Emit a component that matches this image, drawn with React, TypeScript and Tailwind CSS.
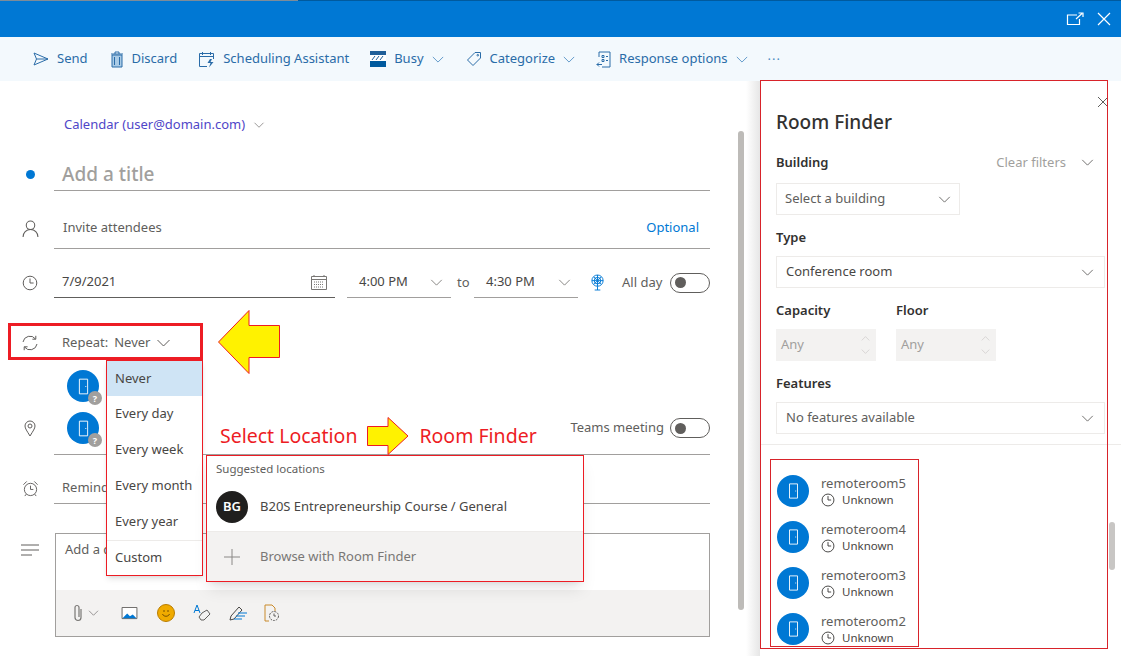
import { ReactNode } from "react";

const font = { fontFamily: '"Noto Sans", sans-serif' };

function Chevron({ className = "" }: { className?: string }) {
  return (
    <svg viewBox="0 0 14 8" className={className} fill="none" stroke="currentColor" strokeWidth="1">
      <path d="M1 1l6 6 6-6" />
    </svg>
  );
}

function Door({ small = false }: { small?: boolean }) {
  return (
    <svg viewBox="0 0 12 18" className={small ? "h-[16px] w-[11px]" : "h-[17px] w-[11px]"} fill="none" stroke="#fff" strokeWidth="1">
      <path d="M1.5 1h9v16h-9z" />
      <path d="M8 9h1" />
    </svg>
  );
}

function ClockIcon({ className = "", color = "currentColor" }: { className?: string; color?: string }) {
  return (
    <svg viewBox="0 0 16 16" className={className} fill="none" stroke={color} strokeWidth="1">
      <circle cx="8" cy="8" r="6.8" />
      <path d="M8 3.5V8h3.6" />
    </svg>
  );
}

function Toggle() {
  return (
    <div className="flex h-[20px] w-[40px] items-center rounded-full border border-[#605e5c] pl-[4px]">
      <div className="h-[11px] w-[11px] rounded-full bg-[#605e5c]" />
    </div>
  );
}

function ToolItem({ icon, label, chevron, className = "" }: { icon: ReactNode; label: string; chevron?: boolean; className?: string }) {
  return (
    <div className={`flex items-center ${className}`}>
      {icon}
      <span className="ml-[8px] text-[13px] text-[#2a6ca8]">{label}</span>
      {chevron && <Chevron className="ml-[8px] h-[7px] w-[12px] text-[#4d8cc2]" />}
    </div>
  );
}

function Row({ icon, children, className = "" }: { icon?: ReactNode; children: ReactNode; className?: string }) {
  return (
    <div className={`flex ${className}`}>
      <div className="flex w-[54px] shrink-0 items-center justify-center pr-[1px] pl-[7px] text-[#605e5c]">{icon}</div>
      {children}
    </div>
  );
}

function RoomAvatar() {
  return (
    <div className="relative flex h-[32px] w-[32px] items-center justify-center rounded-full bg-[#0078d4]">
      <Door />
      <div className="absolute right-[-3px] bottom-[-3px] flex h-[14px] w-[14px] items-center justify-center rounded-full bg-[#a19f9d] text-[9px] leading-none font-bold text-white">
        ?
      </div>
    </div>
  );
}

function FilterLabel({ children, className = "" }: { children: ReactNode; className?: string }) {
  return <div className={`text-[13px] leading-[18px] font-semibold text-[#323130] ${className}`}>{children}</div>;
}

function SelectBox({ label, className = "", muted = false }: { label: string; className?: string; muted?: boolean }) {
  return (
    <div className={`flex h-[32px] items-center justify-between border border-[#edebe9] ${className}`}>
      <span className={`text-[13px] ${muted ? "text-[#605e5c]" : "text-[#484644]"}`}>{label}</span>
      <Chevron className="h-[7px] w-[13px] text-[#605e5c]" />
    </div>
  );
}

function AnyInput() {
  return (
    <div className="flex h-[32px] w-[100px] items-center justify-between bg-[#f3f2f1] pr-[6px] pl-[5px]">
      <span className="text-[13px] text-[#a19f9d]">Any</span>
      <div className="flex flex-col gap-[8px] text-[#c8c6c4]">
        <Chevron className="h-[5px] w-[9px] rotate-180" />
        <Chevron className="h-[5px] w-[9px]" />
      </div>
    </div>
  );
}

const rooms = ["remoteroom5", "remoteroom4", "remoteroom3", "remoteroom2"];
const repeatOptions = ["Every day", "Every week", "Every month", "Every year"];

export default function App() {
  return (
    <div className="relative flex h-[656px] w-[1121px] flex-col overflow-hidden bg-white text-[#323130]" style={font}>
      {/* title bar */}
      <div className="flex h-[37px] shrink-0 flex-col bg-[#0078d4]">
        <div className="flex h-[1px] bg-[#005a9e]">
          <div className="w-[298px] bg-[#7d8c99]" />
        </div>
        <div className="flex flex-1 items-center justify-end gap-[13px] pr-[10px] text-white">
          <svg viewBox="0 0 18 14" className="h-[14px] w-[18px]" fill="none" stroke="currentColor" strokeWidth="1.2">
            <path d="M11 3H1.5v9.5h12V7" />
            <path d="M10 7l6-5.5M12.5 1H17v4" />
          </svg>
          <svg viewBox="0 0 14 14" className="h-[14px] w-[14px]" fill="none" stroke="currentColor" strokeWidth="1.2">
            <path d="M1 1l12 12M13 1L1 13" />
          </svg>
        </div>
      </div>

      {/* command bar */}
      <div className="flex h-[44px] shrink-0 items-center bg-[#f3f9fd] pl-[33px]">
        <ToolItem
          label="Send"
          icon={
            <svg viewBox="0 0 16 16" className="h-[16px] w-[16px]" fill="none" stroke="#2a6ca8" strokeWidth="1">
              <path d="M1 2l14 6-14 6 2.5-6zM3.5 8H15" />
            </svg>
          }
        />
        <ToolItem
          className="ml-[22px]"
          label="Discard"
          icon={
            <svg viewBox="0 0 14 17" className="h-[17px] w-[14px]" fill="none" stroke="#2a6ca8" strokeWidth="1">
              <path d="M2 4h10v12H2z" fill="#a9cbe6" />
              <path d="M1 3h12M5 3V1h4v2M4.5 6v8M9.5 6v8" />
            </svg>
          }
        />
        <ToolItem
          className="ml-[21px]"
          label="Scheduling Assistant"
          icon={
            <svg viewBox="0 0 17 17" className="h-[17px] w-[17px]" fill="none" stroke="#2a6ca8" strokeWidth="1">
              <path d="M9 15.5H1.5v-13h14V8M1.5 5.5h14M4.5 1v3M12.5 1v3" />
              <path d="M12 8l-2.5 4h3L11 16.5l4.5-5.5h-3l1.5-3z" fill="#2a6ca8" stroke="none" />
            </svg>
          }
        />
        <ToolItem
          className="ml-[21px]"
          label="Busy"
          chevron
          icon={
            <svg viewBox="0 0 16 16" className="h-[16px] w-[16px]">
              <path d="M0 0h16v4H0z" fill="#1f5f99" />
              <path d="M0 4h16v6H0z" fill="#fff" />
              <path d="M2 9l3-4M6 9l3-4M10 9l3-4" stroke="#1f5f99" strokeWidth="1" />
              <path d="M0 10h16v6H0z" fill="#005a9e" />
            </svg>
          }
        />
        <ToolItem
          className="ml-[22px]"
          label="Categorize"
          chevron
          icon={
            <svg viewBox="0 0 16 16" className="h-[16px] w-[16px]" fill="none" stroke="#2a6ca8" strokeWidth="1">
              <path d="M9 1.5h5.5V7L7 14.5 1.5 9z" />
              <circle cx="11.8" cy="4.2" r="0.8" />
            </svg>
          }
        />
        <ToolItem
          className="ml-[21px]"
          label="Response options"
          chevron
          icon={
            <svg viewBox="0 0 15 17" className="h-[17px] w-[15px]" fill="none" stroke="#2a6ca8" strokeWidth="1">
              <path d="M3 6V1h11v15H6" />
              <path d="M6 4.5h2v2H6zM10 5.5h2M6 8.5h2v2H6zM10 9.5h2M6 13.5H0.8M3 11.5l-2 2 2 2" />
            </svg>
          }
        />
        <span className="ml-[20px] text-[13px] leading-none tracking-[1px] text-[#4d8cc2]">···</span>
      </div>

      <div className="flex min-h-0 flex-1">
        {/* compose form */}
        <div className="relative flex w-[760px] shrink-0">
          <div className="w-[737px] shrink-0">
            <div className="mt-[33px] flex h-[22px] items-center pl-[64px] text-[13px] text-[#4f46c8]">
              Calendar (user@domain.com)
              <Chevron className="ml-[8px] h-[6px] w-[12px] text-[#797775]" />
            </div>

            <Row
              className="mt-[22px] h-[33px]"
              icon={<div className="h-[9px] w-[9px] rounded-full bg-[#0078d4]" />}
            >
              <div className="flex w-[656px] items-center border-b border-[#a19f9d] pl-[8px] text-[19px] font-medium text-[#a19f9d]">
                Add a title
              </div>
            </Row>

            <Row
              className="mt-[16px] h-[42px]"
              icon={
                <svg viewBox="0 0 16 16" className="h-[17px] w-[17px]" fill="none" stroke="currentColor" strokeWidth="1">
                  <circle cx="8" cy="5" r="4" />
                  <path d="M1 16c0-4 3-7 7-7s7 3 7 7" />
                </svg>
              }
            >
              <div className="flex w-[656px] items-center justify-between border-b border-[#a19f9d] pr-[11px] pl-[9px] text-[13px]">
                <span className="text-[#605e5c]">Invite attendees</span>
                <span className="text-[#0078d4]">Optional</span>
              </div>
            </Row>

            <Row
              className="mt-[18px] h-[31px]"
              icon={<ClockIcon className="h-[16px] w-[16px]" color="#605e5c" />}
            >
              <div className="flex w-[656px] items-center text-[13px]">
                <div className="flex h-full w-[281px] items-center justify-between border-b border-[#605e5c] pr-[8px] pl-[8px] text-[#484644]">
                  7/9/2021
                  <svg viewBox="0 0 16 16" className="h-[16px] w-[16px]" fill="none" stroke="#797775" strokeWidth="1">
                    <path d="M.5 2.5h15v13H.5zM.5 5.5h15M3 1v2M13 1v2" />
                    <path d="M3 8h10M3 10.5h10M3 13h10" strokeDasharray="1 1" />
                  </svg>
                </div>
                <div className="ml-[12px] flex h-full w-[104px] items-center justify-between border-b border-[#a19f9d] pr-[8px] pl-[12px] text-[#484644]">
                  4:00 PM
                  <Chevron className="h-[7px] w-[13px] text-[#797775]" />
                </div>
                <span className="mx-[6px] w-[11px] text-[#605e5c]">to</span>
                <div className="flex h-full w-[104px] items-center justify-between border-b border-[#a19f9d] pr-[7px] pl-[12px] text-[#484644]">
                  4:30 PM
                  <Chevron className="h-[7px] w-[13px] text-[#797775]" />
                </div>
                <svg viewBox="0 0 16 18" className="ml-[12px] h-[17px] w-[15px]" fill="none" stroke="#0078d4" strokeWidth="1">
                  <circle cx="8" cy="7" r="6" />
                  <circle cx="8" cy="7" r="3.5" />
                  <path d="M2 7h12M8 1v12M4 3l8 8M12 3l-8 8M8 13v4M5 17h6" />
                </svg>
                <span className="ml-[17px] text-[#605e5c]">All day</span>
                <div className="ml-auto">
                  <Toggle />
                </div>
              </div>
            </Row>

            <Row
              className="mt-[30px] h-[30px]"
              icon={
                <svg viewBox="0 0 16 16" className="h-[16px] w-[16px]" fill="none" stroke="currentColor" strokeWidth="1">
                  <path d="M1 7a7 7 0 0 1 12.5-3M15 9a7 7 0 0 1-12.5 3" />
                  <path d="M13.8 .8v3.4h-3.4M2.2 15.2v-3.4h3.4" />
                </svg>
              }
            >
              <div className="flex items-center pl-[8px] text-[13px] text-[#605e5c]">
                Repeat:
                <span className="ml-[6px]">Never</span>
                <Chevron className="ml-[6px] h-[8px] w-[15px]" />
              </div>
            </Row>

            <Row
              className="h-[97px]"
              icon={
                <svg viewBox="0 0 12 17" className="mt-[44px] h-[17px] w-[12px]" fill="none" stroke="currentColor" strokeWidth="1">
                  <path d="M6 16C3 11 1 8.500 1 6a5 5 0 0 1 10 0c0 2.500-2 5-5 10z" />
                  <circle cx="6" cy="6" r="2" />
                </svg>
              }
            >
              <div className="flex w-[656px] justify-between border-b border-[#a19f9d] pt-[12px] pr-0 pl-[13px]">
                <div className="flex flex-col gap-[10px]">
                  <RoomAvatar />
                  <RoomAvatar />
                </div>
                <div className="mt-[48px] flex h-[20px] items-center gap-[6px] text-[13px] text-[#605e5c]">
                  Teams meeting
                  <Toggle />
                </div>
              </div>
            </Row>

            <Row
              className="mt-[18px] h-[31px]"
              icon={
                <svg viewBox="0 0 18 18" className="h-[17px] w-[17px]" fill="none" stroke="currentColor" strokeWidth="1">
                  <circle cx="9" cy="10" r="6.500" />
                  <path d="M9 6v4h3M1.500 5L5 1.500M16.500 5L13 1.500M4.500 15l-1.500 2M13.500 15l1.500 2" />
                </svg>
              }
            >
              <div className="flex w-[656px] items-center border-b border-[#a19f9d] pl-[8px] text-[13px] text-[#605e5c]">
                Reminder
              </div>
            </Row>

            <Row
              className="mt-[29px] h-[104px]"
              icon={
                <svg viewBox="0 0 18 12" className="mb-[70px] h-[12px] w-[18px]" fill="none" stroke="currentColor" strokeWidth="1">
                  <path d="M0 1h18M0 6h18M0 11h11" />
                </svg>
              }
            >
              <div className="ml-[1px] flex w-[655px] flex-col border border-[#a19f9d]">
                <div className="flex-1 pt-[6px] pl-[9px] text-[13px] text-[#605e5c]">Add a description</div>
                <div className="flex h-[46px] items-center bg-[#f3f2f1] pl-[17px]">
                  <svg viewBox="0 0 10 18" className="h-[18px] w-[10px]" fill="none" stroke="#797775" strokeWidth="1.200">
                    <path d="M8 5v8.500a3 3 0 0 1-6 0V3.500a2 2 0 0 1 4 0V13" />
                  </svg>
                  <Chevron className="ml-[5px] h-[6px] w-[11px] text-[#797775]" />
                  <svg viewBox="0 0 17 14" className="ml-[22px] h-[13px] w-[17px]" fill="none" stroke="#605e5c" strokeWidth="1">
                    <path d="M.5 .5h16v12H.5z" fill="#fff" />
                    <path d="M1 12l5-5 3 3 3-2 4 4H1z" fill="#0078d4" stroke="none" />
                  </svg>
                  <div className="ml-[19px] flex h-[18px] w-[18px] items-center justify-center rounded-full border border-[#b97d00] bg-[#f0ab00]">
                    <svg viewBox="0 0 12 12" className="h-[12px] w-[12px]" fill="none" stroke="#7a5200" strokeWidth="1">
                      <path d="M4 3v2M8 3v2M2.500 7c1 3 6 3 7 0" />
                    </svg>
                  </div>
                  <svg viewBox="0 0 18 18" className="ml-[18px] h-[18px] w-[18px]" fill="none" strokeWidth="1">
                    <path d="M1 9l3-8 3 8M2 6.500h4" stroke="#0078d4" />
                    <path d="M9 9l5-3 3 4-6 6H8l-2-3z" stroke="#605e5c" />
                  </svg>
                  <svg viewBox="0 0 20 18" className="ml-[17px] h-[18px] w-[20px]" fill="none" strokeWidth="1">
                    <path d="M2 16l1-4 8-9 3 3-8 9z" stroke="#484644" />
                    <path d="M10 9h9M8 12h9M6 15h8" stroke="#0078d4" />
                  </svg>
                  <svg viewBox="0 0 16 18" className="ml-[16px] h-[18px] w-[16px]" fill="none" strokeWidth="1">
                    <path d="M5 17H1V1h7l3 3v3" stroke="#c98a2b" />
                    <circle cx="10" cy="12" r="4.500" stroke="#605e5c" strokeDasharray="2 1" />
                    <path d="M10 9.500V12h2" stroke="#605e5c" />
                  </svg>
                </div>
              </div>
            </Row>
          </div>

          {/* form scrollbar */}
          <div className="relative w-[9px] shrink-0">
            <div className="absolute top-[50px] left-[1px] w-[6px] rounded-full bg-[#bdbbb8] h-[479px]" />
          </div>
          <div className="w-[14px] bg-gradient-to-r from-white to-[#e6e6e6]" />

          {/* repeat options flyout */}
          <div className="absolute top-[279px] left-[106px] z-10 w-[97px] border border-[#ed1c24] bg-white text-[13px] text-[#484644] shadow-md">
            <div className="flex h-[35px] items-center bg-[#cfe4f5] pl-[8px]">Never</div>
            {repeatOptions.map((opt) => (
              <div key={opt} className="flex h-[36px] items-center pl-[8px]">
                {opt}
              </div>
            ))}
            <div className="flex h-[35px] items-center border-t border-[#edebe9] pl-[8px]">Custom</div>
          </div>

          {/* red highlight round the repeat row */}
          <div className="absolute top-[242px] left-[8px] z-20 h-[37px] w-[195px] border-[3px] border-[#ed1c24]" />

          {/* location suggestions */}
          <div className="absolute top-[374px] left-[206px] z-10 w-[378px] border border-[#ed1c24] bg-white shadow-lg">
            <div className="h-[26px] pt-[4px] pl-[9px] text-[11.500px] text-[#605e5c]">Suggested locations</div>
            <div className="flex h-[49px] items-center pl-[9px] text-[13px] text-[#484644]">
              <div className="flex h-[32px] w-[32px] items-center justify-center rounded-full bg-[#201f1e] text-[13px] font-semibold text-white">
                BG
              </div>
              <span className="ml-[12px]">B20S Entrepreneurship Course / General</span>
            </div>
            <div className="flex h-[50px] items-center border-t border-[#edebe9] bg-[#f3f2f1] pl-[16px] text-[13px] text-[#797775]">
              <svg viewBox="0 0 18 18" className="h-[18px] w-[18px]" fill="none" stroke="#8a8886" strokeWidth="1">
                <path d="M9 1v16M1 9h16" />
              </svg>
              <span className="ml-[19px]">Browse with Room Finder</span>
            </div>
          </div>

          {/* annotations */}
          <svg viewBox="0 0 62 64" className="absolute top-[229px] left-[218px] z-20 h-[64px] w-[62px]">
            <path d="M.5 32L31 .5v15h30.500v32H31v16z" fill="#fff200" stroke="#ed1c24" strokeWidth="1" />
          </svg>
          <div className="absolute top-[336px] left-[220px] z-20 flex items-center text-[19.500px] leading-[28px] text-[#ed1c24]">
            Select Location
            <svg viewBox="0 0 42 38" className="ml-[10px] h-[38px] w-[42px]">
              <path d="M41 19L21 .5v9H.5v19H21v9z" fill="#fff200" stroke="#ed1c24" strokeWidth="1" />
            </svg>
            <span className="ml-[10px]">Room Finder</span>
          </div>
        </div>

        {/* room finder panel */}
        <div className="relative flex min-w-0 flex-1 flex-col">
          <div className="absolute top-[-1px] left-0 z-20 h-[569px] w-[348px] border border-[#d8232a]" />
          <div className="relative flex h-[57px] items-end pb-[2px] pl-[16px]">
            <h2 className="text-[19px] leading-[28px] font-medium text-[#323130]">Room Finder</h2>
          </div>
          <div className="w-[345px] pl-[16px]">
            <div className="mt-[15px] flex items-center justify-between pr-[11px]">
              <FilterLabel>Building</FilterLabel>
              <div className="flex items-center gap-[15px] text-[13px] leading-[18px] text-[#a19f9d]">
                Clear filters
                <Chevron className="h-[7px] w-[13px] text-[#605e5c]" />
              </div>
            </div>
            <SelectBox label="Select a building" className="mt-[12px] w-[184px] pr-[8px] pl-[8px]" muted />
            <FilterLabel className="mt-[13px]">Type</FilterLabel>
            <SelectBox label="Conference room" className="mt-[10px] w-[329px] pr-[10px] pl-[9px]" />
            <div className="mt-[13px] flex gap-[20px]">
              <div>
                <FilterLabel>Capacity</FilterLabel>
                <div className="mt-[10px]">
                  <AnyInput />
                </div>
              </div>
              <div>
                <FilterLabel>Floor</FilterLabel>
                <div className="mt-[10px]">
                  <AnyInput />
                </div>
              </div>
            </div>
            <FilterLabel className="mt-[13px]">Features</FilterLabel>
            <SelectBox label="No features available" className="mt-[10px] w-[329px] pr-[10px] pl-[9px]" muted />
          </div>
          <div className="mt-[10px] flex min-h-0 flex-1 border-t border-[#edebe9] pt-[14px]">
            <div className="ml-[10px] h-[188px] w-[149px] border border-[#d8232a] pt-[8px] pl-[6px]">
              {rooms.map((name) => (
                <div key={name} className="flex h-[46px] items-center">
                  <div className="flex h-[32px] w-[32px] shrink-0 items-center justify-center rounded-full bg-[#0078d4]">
                    <Door small />
                  </div>
                  <div className="ml-[12px]">
                    <div className="text-[13px] leading-[18px] text-[#605e5c]">{name}</div>
                    <div className="flex items-center text-[11.500px] leading-[16px] text-[#484644]">
                      <ClockIcon className="h-[14px] w-[14px]" color="#323130" />
                      <span className="ml-[7px]">Unknown</span>
                    </div>
                  </div>
                </div>
              ))}
            </div>
          </div>
          <svg viewBox="0 0 14 14" className="absolute top-[14px] right-[11px] z-10 h-[14px] w-[14px]" fill="none" stroke="#605e5c" strokeWidth="1">
            <path d="M2 2l10 10M12 2L2 12" />
          </svg>
          {/* list scrollbar */}
          <div className="absolute top-[441px] right-[6px] h-[48px] w-[6px] rounded-full bg-[#c8c6c4]" />
        </div>
      </div>
    </div>
  );
}
